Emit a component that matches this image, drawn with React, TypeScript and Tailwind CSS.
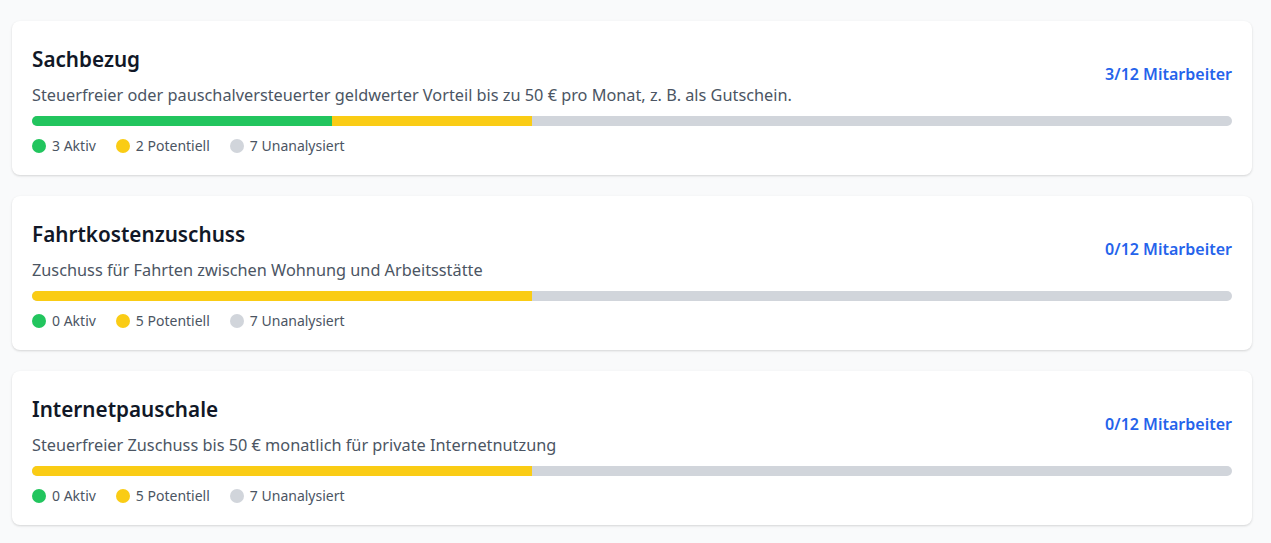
import React from "react";

type Benefit = {
  title: string;
  description: string;
  active: number;
  potential: number;
  unanalyzed: number;
};

const TOTAL = 12;

const benefits: Benefit[] = [
  {
    title: "Sachbezug",
    description:
      "Steuerfreier oder pauschalversteuerter geldwerter Vorteil bis zu 50 € pro Monat, z. B. als Gutschein.",
    active: 3,
    potential: 2,
    unanalyzed: 7,
  },
  {
    title: "Fahrtkostenzuschuss",
    description: "Zuschuss für Fahrten zwischen Wohnung und Arbeitsstätte",
    active: 0,
    potential: 5,
    unanalyzed: 7,
  },
  {
    title: "Internetpauschale",
    description: "Steuerfreier Zuschuss bis 50 € monatlich für private Internetnutzung",
    active: 0,
    potential: 5,
    unanalyzed: 7,
  },
];

function Card({ b }: { b: Benefit }) {
  return (
    <div className="bg-white rounded-lg shadow-[0_1px_3px_rgba(0,0,0,0.1),0_1px_2px_rgba(0,0,0,0.06)] px-5 pt-6 pb-[19px]">
      <div className="flex items-start justify-between">
        <div>
          <h2 className="text-[20.7px] leading-7 font-semibold text-[#111827]">{b.title}</h2>
          <p className="mt-2 text-[16.3px] leading-7 text-[#4b5563]">{b.description}</p>
        </div>
        <div className="mt-[17px] text-[16px] leading-6 font-semibold text-[#2563eb]">
          {b.active}/{TOTAL} Mitarbeiter
        </div>
      </div>
      <div className="mt-[7px] h-2.5 w-full rounded-full bg-[#d1d5db] overflow-hidden flex">
        <div className="h-full bg-[#22c55e]" style={{ width: `${(b.active / TOTAL) * 100}%` }} />
        <div className="h-full bg-[#facc15]" style={{ width: `${(b.potential / TOTAL) * 100}%` }} />
      </div>
      <div className="mt-[10px] flex items-center gap-5 text-sm leading-5 text-[#4b5563]">
        <div className="flex items-center gap-1.5">
          <span className="block w-3.5 h-3.5 shrink-0 rounded-full bg-[#22c55e]" />
          <span>{b.active} Aktiv</span>
        </div>
        <div className="flex items-center gap-1.5">
          <span className="block w-3.5 h-3.5 shrink-0 rounded-full bg-[#facc15]" />
          <span>{b.potential} Potentiell</span>
        </div>
        <div className="flex items-center gap-1.5">
          <span className="block w-3.5 h-3.5 shrink-0 rounded-full bg-[#d1d5db]" />
          <span>{b.unanalyzed} Unanalysiert</span>
        </div>
      </div>
    </div>
  );
}

export default function App() {
  return (
    <div
      className="min-h-screen bg-[#f9fafb] pt-[21px] pl-3 pr-[19px]"
      style={{ fontFamily: '"Noto Sans", "Open Sans", sans-serif' }}
    >
      <div className="flex flex-col gap-[21px]">
        {benefits.map((b) => (
          <Card key={b.title} b={b} />
        ))}
      </div>
    </div>
  );
}
